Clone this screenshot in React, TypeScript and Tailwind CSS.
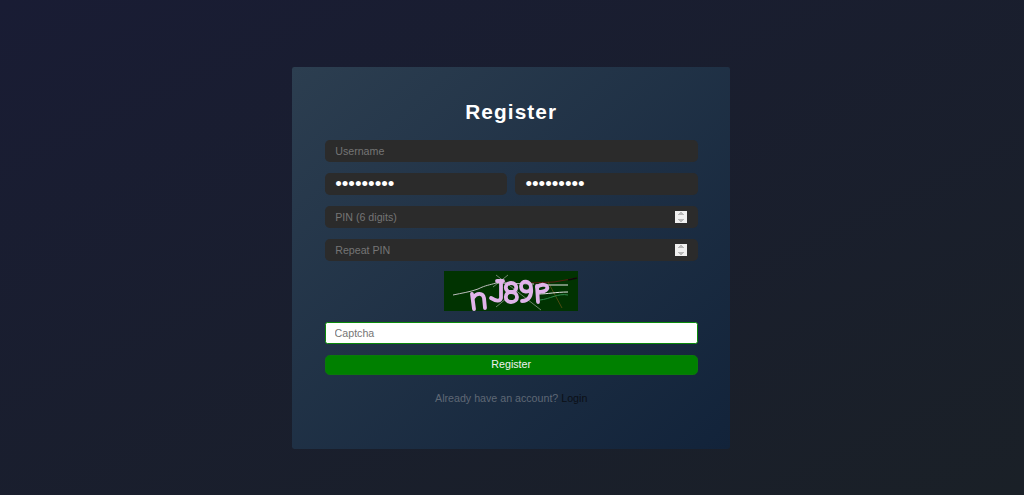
const inputBase =
  "h-[27.5px] w-full min-w-0 rounded-[6px] bg-[#2b2b2b] px-[13px] text-[13.33px] text-white outline-none placeholder:text-[#757575]";
const spin =
  "[&::-webkit-inner-spin-button]:opacity-100 [&::-webkit-inner-spin-button]:[filter:contrast(0.35)_brightness(1.4)]";

const Captcha = () => (
  <svg viewBox="0 0 134 40" className="block h-[50px] w-[167.5px] bg-[#013301]">
    <path d="M86 12 L110 11 L133 7" stroke="#5a1a10" strokeWidth="1" fill="none" />
    <path d="M124 9 L133 7" stroke="#0a0a0a" strokeWidth="1.4" fill="none" />
    <path d="M104 11 L118 37" stroke="#4d4a10" strokeWidth="1" fill="none" />
    <path d="M96 29 C106 28 114 22 124 24" stroke="#2f8a4a" strokeWidth="1" fill="none" />
    <path d="M52 4 L97 39" stroke="#8a9a88" strokeWidth="0.8" fill="none" />
    <path d="M64 4 L49 16" stroke="#8a9a88" strokeWidth="0.8" fill="none" />
    <path d="M63 27 L52 36" stroke="#8a9a88" strokeWidth="0.8" fill="none" />
    <path d="M9 24 C18 22 26 21 34 18 C42 14 46 14 52 12 L90 13" stroke="#bdbdbd" strokeWidth="1" fill="none" />
    <path d="M94 14 L124 14" stroke="#e6e6e6" strokeWidth="1" fill="none" />
    <path d="M94 23 C104 23 112 21 124 21" stroke="#e6e6e6" strokeWidth="1" fill="none" />
    <g stroke="#e0b4ea" strokeWidth="3.8" fill="none" strokeLinecap="round" strokeLinejoin="round">
      <path d="M28 23 L30 38" />
      <path d="M29 27 C33 21 39 22 40 27 L41 37" />
      <path d="M53 10 L59 10" />
      <path d="M57 10 L57 27 C56 31 52 30 47 27" />
      <path d="M67 12 C60 12 60 21 67 21 C75 21 75 31 67 31 C60 31 60 21 67 21 C74 21 74 12 67 12 Z" />
      <path d="M87 17 C87 9 77 9 77 15 C77 22 86 22 87 17 C88 24 85 30 78 30" />
      <path d="M93 15 L94 31" />
      <path d="M93 16 C98 12 105 14 103 18 C101 21 97 21 94 21" />
    </g>
  </svg>
);

export default function App() {
  return (
    <div className="flex h-[619px] justify-center bg-gradient-to-br from-[#191c34] to-[#1a2027] pt-[83.75px] font-['Liberation_Sans',Arial,sans-serif] [zoom:0.8]">
      <div className="mr-[2.5px] flex h-[477.5px] w-[546.5px] flex-col rounded-[3px] bg-gradient-to-br from-[#2c3e50] to-[#12233a] pt-[39px] pr-[40px] pl-[40.5px]">
        <h1 className="text-center text-[26px] leading-[36px] font-bold tracking-[1.35px] text-white">Register</h1>
        <form className="mt-[16.5px] flex flex-col gap-[13.5px]">
          <input className={inputBase} placeholder="Username" />
          <div className="flex gap-[9.5px]">
            <input type="password" readOnly value="123456789" className={`${inputBase} !text-[23.5px]`} />
            <input type="password" readOnly value="123456789" className={`${inputBase} !text-[23.5px]`} />
          </div>
          <input type="number" className={`${inputBase} ${spin}`} placeholder="PIN (6 digits)" />
          <input type="number" className={`${inputBase} ${spin}`} placeholder="Repeat PIN" />
          <div className="flex justify-center">
            <Captcha />
          </div>
          <input
            className="h-[27.5px] w-full rounded-[3px] border-2 border-[#0a8a0a] bg-white px-[11px] text-[13.33px] text-black outline-none placeholder:text-[#757575]"
            placeholder="Captcha"
          />
          <button type="button" className="h-[25.5px] w-full rounded-[6px] border border-[#0a7a0a] bg-[#008000] text-[13.33px] text-[#f0f0f0]">
            Register
          </button>
        </form>
        <p className="mt-[18.5px] text-center text-[13.33px] leading-[20px] text-[#5f6875]">
          Already have an account? <a className="text-[#0b0f16]">Login</a>
        </p>
      </div>
    </div>
  );
}
